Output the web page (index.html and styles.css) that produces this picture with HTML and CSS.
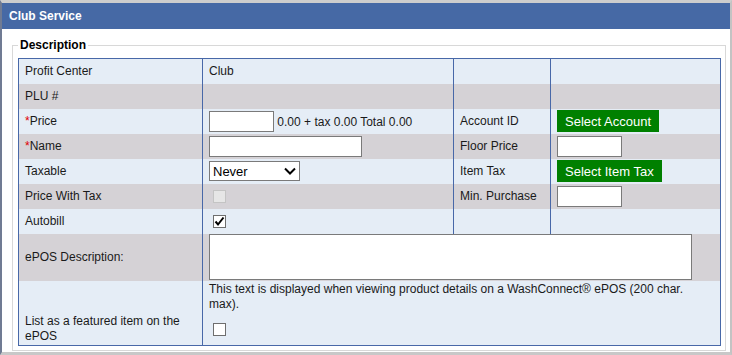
FILE: index.html
```
<!DOCTYPE html>
<html lang="en">
<head>
<meta charset="utf-8">
<title>Club Service</title>
<link rel="stylesheet" href="styles.css">
</head>
<body>
<div class="window">
  <div class="indicator"></div>
  <div class="titlebar">Club Service</div>
  <div class="content">
    <fieldset class="group">
      <legend>Description</legend>
      <table class="form">
        <colgroup>
          <col class="c1"><col class="c2"><col class="c3"><col class="c4">
        </colgroup>
        <tr class="light">
          <td>Profit Center</td><td>Club</td><td></td><td></td>
        </tr>
        <tr class="gray">
          <td>PLU #</td><td></td><td></td><td></td>
        </tr>
        <tr class="light">
          <td><span class="req">*</span>Price</td>
          <td><input class="txt w65" type="text"> <span class="calc">0.00 + tax 0.00 Total 0.00</span></td>
          <td>Account ID</td>
          <td><button class="btn" type="button">Select Account</button></td>
        </tr>
        <tr class="gray">
          <td><span class="req">*</span>Name</td>
          <td><input class="txt w153" type="text"></td>
          <td>Floor Price</td>
          <td><input class="txt w65" type="text"></td>
        </tr>
        <tr class="light">
          <td>Taxable</td>
          <td>
            <span class="select-wrap">
              <select class="sel"><option>Never</option></select>
              <svg class="chev" width="12" height="8" viewBox="0 0 12 8"><path d="M1 1.5 L6 6.5 L11 1.5" fill="none" stroke="#000" stroke-width="2"/></svg>
            </span>
          </td>
          <td>Item Tax</td>
          <td><button class="btn" type="button">Select Item Tax</button></td>
        </tr>
        <tr class="gray">
          <td>Price With Tax</td>
          <td><span class="cb disabled"></span></td>
          <td>Min. Purchase</td>
          <td><input class="txt w65" type="text"></td>
        </tr>
        <tr class="light">
          <td>Autobill</td>
          <td><span class="cb checked"><svg width="11" height="11" viewBox="0 0 11 11"><path d="M1.5 5.5 L4 8.5 L9.5 1.5" fill="none" stroke="#000" stroke-width="2"/></svg></span></td>
          <td></td><td></td>
        </tr>
        <tr class="gray tall">
          <td>ePOS Description:</td>
          <td colspan="3"><textarea class="area"></textarea></td>
        </tr>
        <tr class="light help">
          <td></td>
          <td colspan="3"><div class="helptext">This text is displayed when viewing product details on a WashConnect® ePOS (200 char. max).</div></td>
        </tr>
        <tr class="light featured">
          <td>List as a featured item on the ePOS</td>
          <td colspan="3"><span class="cb"></span></td>
        </tr>
      </table>
    </fieldset>
  </div>
</div>
</body>
</html>
```
FILE: styles.css
```
html, body {
  margin: 0;
  padding: 0;
  background: #ffffff;
}

body {
  font-family: "Liberation Sans", Arial, sans-serif;
  font-size: 12px;
  color: #1a1a1a;
}

.window {
  position: relative;
  width: 732px;
  height: 355px;
  box-sizing: border-box;
  border-top: 3px solid #cdcdcd;
  border-left: 2px solid #707b93;
  border-right: 2px solid #c3c3c3;
  border-bottom: 3px solid #c8c8c8;
  background: #ffffff;
  overflow: hidden;
}

.indicator {
  position: absolute;
  top: -1px;
  left: 358px;
  width: 37px;
  height: 1px;
  background: #8fb3ea;
}

.titlebar {
  height: 26px;
  line-height: 26px;
  padding-left: 7px;
  background: #4669a5;
  color: #ffffff;
  font-weight: bold;
  font-size: 12px;
}

.content {
  padding: 9px 4px 0 10px;
}

.group {
  margin: 0;
  padding: 6px 5px 4px 5px;
  border: 1px solid #d8d8d8;
  min-width: 0;
}

.group legend {
  padding: 0 2px;
  font-weight: bold;
  font-size: 12px;
  line-height: 14px;
  color: #000;
}

.form {
  width: 702px;
  table-layout: fixed;
  border-collapse: collapse;
  border: 1px solid #4868a8;
}

.c1 { width: 184px; }
.c2 { width: 251px; }
.c3 { width: 97px; }
.c4 { width: 170px; }

.form td {
  padding: 0 6px;
  border-left: 1px solid #4868a8;
  vertical-align: middle;
  white-space: normal;
}

.form tr { height: 25px; }
.form tr.light { background: #e5edf6; }
.form tr.gray { background: #d5d2d6; }
.form tr.tall { height: 47px; }
.form tr.help { height: 33px; }
.form tr.featured { height: 30px; }

.form tr.help td { vertical-align: top; padding-top: 1px; }
.form tr.featured td:first-child { line-height: 15.5px; }

.helptext {
  max-width: 492px;
  line-height: 15.5px;
}

.req { color: #e00000; }

.txt {
  box-sizing: border-box;
  height: 21px;
  margin: 0;
  padding: 1px 3px;
  border: 1px solid #7a7a7a;
  border-radius: 0;
  background: #fff;
  font-family: "Liberation Sans", Arial, sans-serif;
  font-size: 13px;
  vertical-align: middle;
}
.w65 { width: 65px; }
.w153 { width: 153px; }

.calc { vertical-align: middle; }

.btn {
  height: 22px;
  margin: 0;
  padding: 0 8px;
  border: none;
  border-radius: 0;
  background: #008000;
  color: #ffffff;
  font-family: "Liberation Sans", Arial, sans-serif;
  font-size: 13px;
  vertical-align: middle;
  cursor: pointer;
}

.select-wrap {
  position: relative;
  display: inline-block;
  vertical-align: middle;
}

.sel {
  -webkit-appearance: none;
  appearance: none;
  box-sizing: border-box;
  width: 91px;
  height: 20px;
  margin: 0;
  padding: 0 0 0 3px;
  border: 1px solid #7a7a7a;
  border-radius: 0;
  background: #ffffff;
  color: #000;
  font-family: "Liberation Sans", Arial, sans-serif;
  font-size: 13px;
  display: block;
}

.chev {
  position: absolute;
  right: 4px;
  top: 6px;
  pointer-events: none;
}

.cb {
  display: inline-block;
  box-sizing: border-box;
  width: 13px;
  height: 13px;
  margin-left: 4px;
  border: 1px solid #6e6e6e;
  background: #ffffff;
  vertical-align: middle;
  position: relative;
}
.cb svg { display: block; margin: 0; }
.cb.disabled {
  border-color: #c4c4c4;
  background: #e6e6e6;
}

.area {
  display: block;
  box-sizing: border-box;
  width: 483px;
  height: 46px;
  margin: 0;
  padding: 2px;
  border: 1px solid #7a7a7a;
  border-radius: 0;
  resize: none;
  font-family: "Liberation Sans", Arial, sans-serif;
  font-size: 12px;
}
```
